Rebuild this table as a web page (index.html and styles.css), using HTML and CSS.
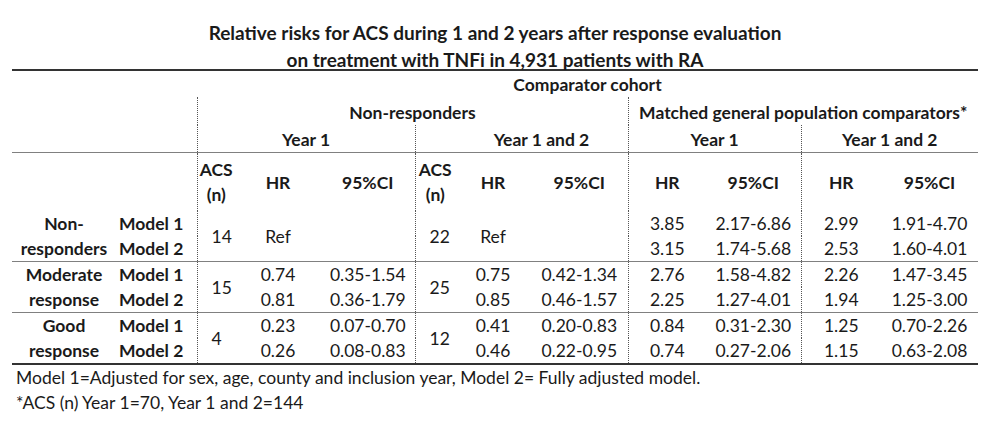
FILE: index.html
```html
<!DOCTYPE html>
<html lang="en">
<head>
<meta charset="utf-8">
<title>Relative risks for ACS</title>
<link rel="stylesheet" href="styles.css">
</head>
<body>
<div class="page">
  <div class="title">Relative risks for ACS during 1 and 2 years after response evaluation<br>on treatment with TNFi in 4,931 patients with RA</div>
  <table class="rr">
    <colgroup>
      <col class="c-group"><col class="c-model">
      <col class="c-acs1"><col class="c-hr1"><col class="c-ci1">
      <col class="c-acs2"><col class="c-hr2"><col class="c-ci2">
      <col class="c-hr3"><col class="c-ci3">
      <col class="c-hr4"><col class="c-ci4">
    </colgroup>
    <thead>
      <tr class="h-a">
        <th colspan="2"></th>
        <th colspan="10">Comparator cohort</th>
      </tr>
      <tr class="h-b">
        <th colspan="2"></th>
        <th colspan="6" class="vd">Non-responders</th>
        <th colspan="4" class="vd">Matched general population comparators*</th>
      </tr>
      <tr class="h-c">
        <th colspan="2"></th>
        <th colspan="3" class="vd">Year 1</th>
        <th colspan="3" class="vd shift">Year 1 and 2</th>
        <th colspan="2" class="vd">Year 1</th>
        <th colspan="2" class="vd">Year 1 and 2</th>
      </tr>
      <tr class="h-d">
        <th></th><th></th>
        <th class="vd">ACS<br>(n)</th><th>HR</th><th>95%CI</th>
        <th class="vd">ACS<br>(n)</th><th>HR</th><th>95%CI</th>
        <th class="vd">HR</th><th>95%CI</th>
        <th class="vd">HR</th><th>95%CI</th>
      </tr>
    </thead>
    <tbody>
      <tr class="g-first">
        <th rowspan="2" class="grp">Non-<br>responders</th>
        <th class="model">Model 1</th>
        <td rowspan="2" class="vd acs">14</td>
        <td rowspan="2">Ref</td>
        <td rowspan="2"></td>
        <td rowspan="2" class="vd acs">22</td>
        <td rowspan="2">Ref</td>
        <td rowspan="2"></td>
        <td class="vd">3.85</td><td>2.17-6.86</td>
        <td class="vd">2.99</td><td>1.91-4.70</td>
      </tr>
      <tr class="g-last">
        <th class="model">Model 2</th>
        <td class="vd">3.15</td><td>1.74-5.68</td>
        <td class="vd">2.53</td><td>1.60-4.01</td>
      </tr>
      <tr class="g-first sep">
        <th rowspan="2" class="grp">Moderate<br>response</th>
        <th class="model">Model 1</th>
        <td rowspan="2" class="vd acs">15</td>
        <td>0.74</td><td>0.35-1.54</td>
        <td rowspan="2" class="vd acs">25</td>
        <td>0.75</td><td>0.42-1.34</td>
        <td class="vd">2.76</td><td>1.58-4.82</td>
        <td class="vd">2.26</td><td>1.47-3.45</td>
      </tr>
      <tr class="g-last">
        <th class="model">Model 2</th>
        <td>0.81</td><td>0.36-1.79</td>
        <td>0.85</td><td>0.46-1.57</td>
        <td class="vd">2.25</td><td>1.27-4.01</td>
        <td class="vd">1.94</td><td>1.25-3.00</td>
      </tr>
      <tr class="g-first sep">
        <th rowspan="2" class="grp">Good<br>response</th>
        <th class="model">Model 1</th>
        <td rowspan="2" class="vd acs">4</td>
        <td>0.23</td><td>0.07-0.70</td>
        <td rowspan="2" class="vd acs">12</td>
        <td>0.41</td><td>0.20-0.83</td>
        <td class="vd">0.84</td><td>0.31-2.30</td>
        <td class="vd">1.25</td><td>0.70-2.26</td>
      </tr>
      <tr class="g-last">
        <th class="model">Model 2</th>
        <td>0.26</td><td>0.08-0.83</td>
        <td>0.46</td><td>0.22-0.95</td>
        <td class="vd">0.74</td><td>0.27-2.06</td>
        <td class="vd">1.15</td><td>0.63-2.08</td>
      </tr>
    </tbody>
  </table>
  <div class="notes">
    <p>Model 1=Adjusted for sex, age, county and inclusion year, Model 2= Fully adjusted model.</p>
    <p>*ACS (n) Year 1=70, Year 1 and 2=144</p>
  </div>
</div>
</body>
</html>
```

FILE: styles.css
```css
html, body {
  margin: 0;
  padding: 0;
  background: #ffffff;
}

body {
  font-family: Lato, "Open Sans", "Liberation Sans", sans-serif;
  font-size: 17.5px;
  color: #1a1a1a;
}

.page {
  width: 966px;
  padding: 0 12px;
}

.title {
  padding-top: 19px;
  height: 50px;
  line-height: 27px;
  font-weight: bold;
  text-align: center;
  font-size: 19px;
}

.rr {
  width: 966px;
  border-collapse: collapse;
  table-layout: fixed;
  border-top: 2px solid #333333;
  border-bottom: 2px solid #333333;
}

.c-group { width: 104px; }
.c-model { width: 81px; }
.c-acs1 { width: 38px; }
.c-hr1 { width: 86px; }
.c-ci1 { width: 94px; }
.c-acs2 { width: 40px; }
.c-hr2 { width: 76px; }
.c-ci2 { width: 97px; }
.c-hr3 { width: 78px; }
.c-ci3 { width: 95px; }
.c-hr4 { width: 80px; }
.c-ci4 { width: 97px; }

.rr th, .rr td {
  padding: 0;
  text-align: center;
  vertical-align: middle;
  line-height: 25px;
  white-space: nowrap;
}

.rr th { font-weight: bold; }
.rr td { font-weight: normal; }

.h-a th { height: 26px; }
.h-b th { height: 23px; padding-top: 3px; }
.h-c th { height: 26px; padding-top: 1px; }
.h-c { border-bottom: 1px solid #808080; }
.h-d th { padding: 4px 0 4px; }

.rr .shift { padding-left: 40px; }

.vd { border-left: 1px dotted #555555; }

.rr .model {
  text-align: left;
  padding-left: 3px;
}

.rr .acs {
  text-align: left;
  padding-left: 14px;
}

.g-first > * { padding-top: 2px; }
.sep { border-top: 1px solid #808080; }

.notes {
  padding-left: 4px;
}

.notes p {
  margin: 0;
  line-height: 25px;
}
```
